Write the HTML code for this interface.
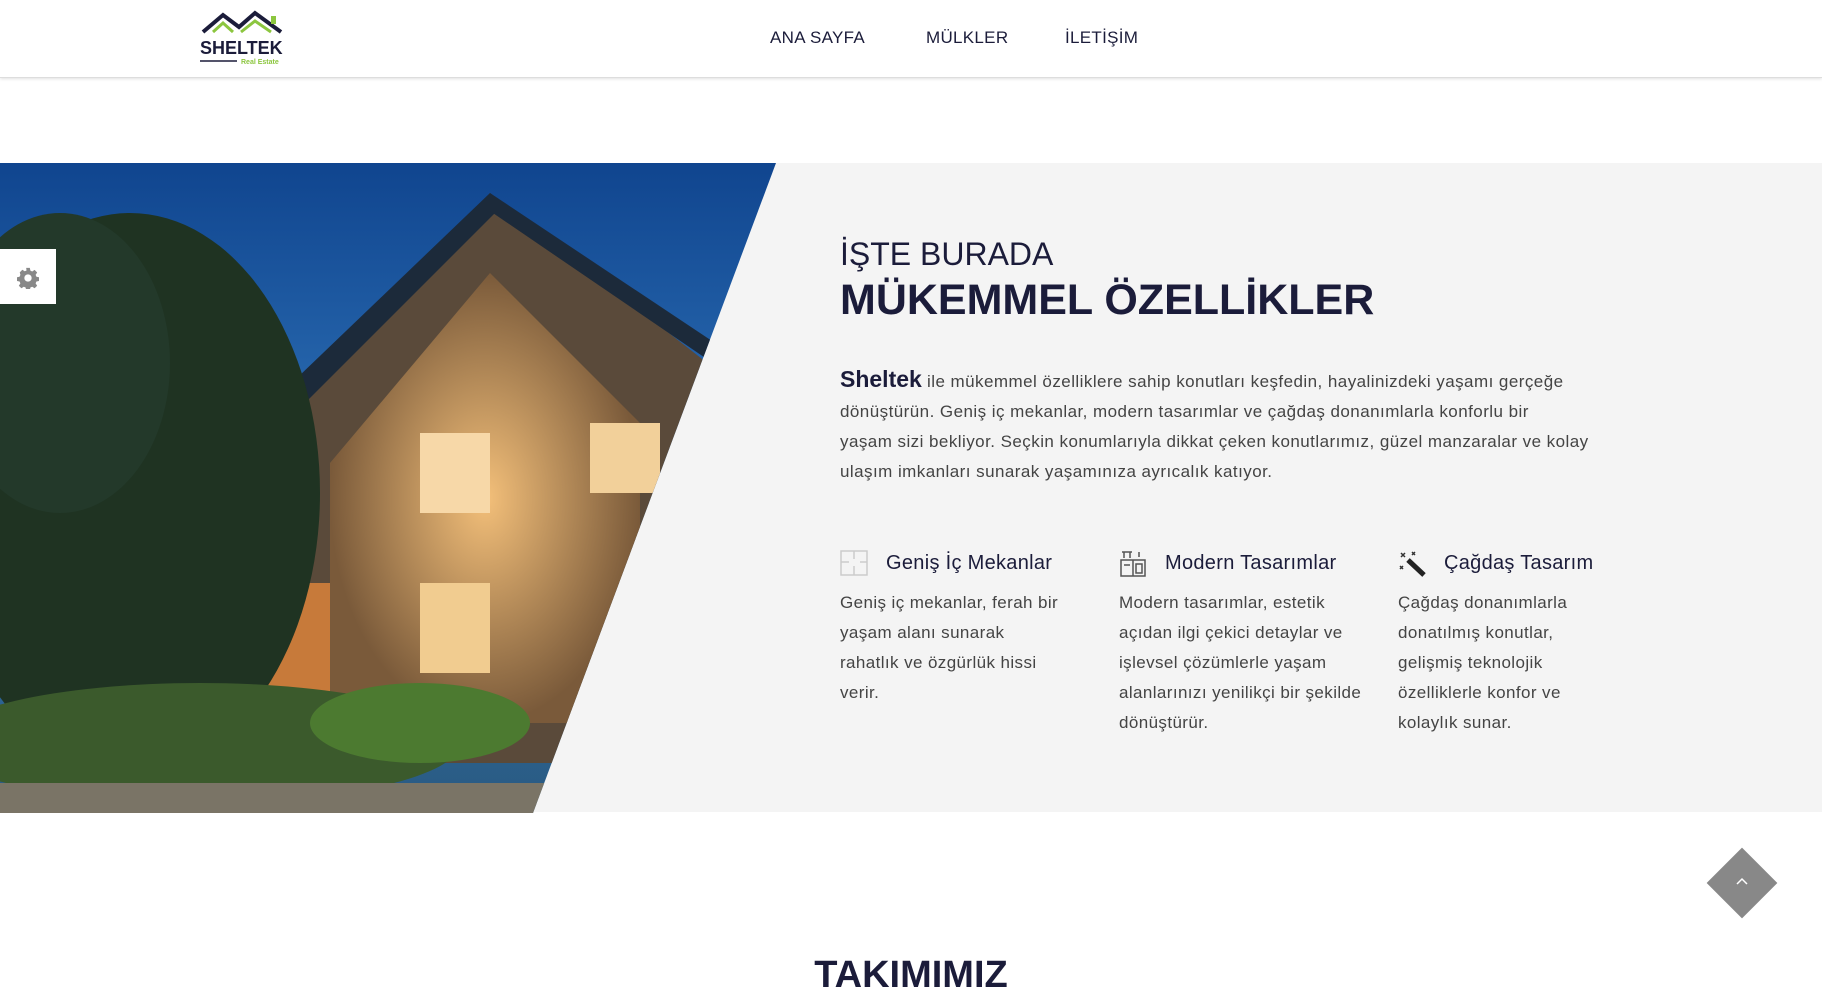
<!DOCTYPE html>
<html><head><meta charset="utf-8"><style>
*{margin:0;padding:0;box-sizing:border-box}
body{width:1822px;height:994px;overflow:hidden;background:#fff;font-family:"Liberation Sans",sans-serif;color:#333;position:relative}
.hdr{position:absolute;left:0;top:0;width:1822px;height:78px;background:#fff;border-bottom:1px solid #ddd;box-shadow:0 1px 3px rgba(0,0,0,.12);z-index:3}
.nav a{position:absolute;top:28px;font-size:17px;color:#1b1c3a;text-decoration:none;letter-spacing:.3px}
.sec{position:absolute;left:0;top:163px;width:1822px;height:649px;background:#f4f4f4}
.gear{position:absolute;left:0;top:249px;width:56px;height:55px;background:#fff;z-index:2}
h3{position:absolute;left:840px;top:236px;font-size:32px;font-weight:normal;color:#1b1c3a}
h2{position:absolute;left:840px;top:276px;font-size:43px;font-weight:bold;color:#1b1c3a}
.p{position:absolute;left:840px;top:364px;width:800px;font-size:17px;line-height:30px;color:#444;letter-spacing:.45px}
.p b{font-size:23px;color:#1b1c3a;letter-spacing:0}
.f{position:absolute;top:552px;width:250px}
.f .t{font-size:20px;color:#1b1c3a;height:32px;padding-left:46px;position:relative;letter-spacing:.3px}
.f svg{position:absolute;left:0;top:-2px}
.f .d{font-size:17px;line-height:30px;color:#444;margin-top:4px;width:245px;letter-spacing:.4px}
.dia{position:absolute;left:1717px;top:858px;width:50px;height:50px;background:#888;transform:rotate(45deg)}
.tk{position:absolute;left:0;width:1822px;text-align:center;top:954px;font-size:38px;font-weight:bold;color:#1b1c3a}
</style></head><body>
<div class="hdr">
<svg style="position:absolute;left:199px;top:10px" width="90" height="56" viewBox="0 0 90 56">
<path d="M4 22 L24 5 L40 17 L56 3 L82 22" fill="none" stroke="#1b1c3a" stroke-width="4"/>
<path d="M14 22 L24 13 L34 22 M42 22 L56 11 L72 22" fill="none" stroke="#8cc63f" stroke-width="3"/>
<rect x="72" y="6" width="5" height="8" fill="#8cc63f"/>
<text x="1" y="44" font-family="Liberation Sans" font-weight="bold" font-size="18" fill="#1b1c3a">SHELTEK</text>
<line x1="1" y1="51" x2="38" y2="51" stroke="#1b1c3a" stroke-width="1.5"/>
<text x="42" y="54" font-family="Liberation Sans" font-weight="bold" font-size="7" fill="#8cc63f">Real Estate</text>
</svg>
<div class="nav"><a style="left:770px">ANA SAYFA</a><a style="left:926px">MÜLKLER</a><a style="left:1065px">İLETİŞİM</a></div>
</div>
<div class="sec"></div>
<svg style="position:absolute;left:0;top:163px" width="780" height="650" viewBox="0 0 780 650">
<defs>
<clipPath id="c"><polygon points="0,0 776,0 533,650 0,650"/></clipPath>
<linearGradient id="sky" x1="0" y1="0" x2="0" y2="1"><stop offset="0" stop-color="#10458f"/><stop offset=".5" stop-color="#2f73b8"/><stop offset="1" stop-color="#2a5a80"/></linearGradient>
<radialGradient id="glow" cx=".5" cy=".5" r=".5"><stop offset="0" stop-color="#f4c07a"/><stop offset="1" stop-color="#7a5a3a"/></radialGradient>
</defs>
<g clip-path="url(#c)">
<rect width="780" height="650" fill="url(#sky)"/>
<polygon points="270,280 490,30 720,210 720,600 270,600" fill="#5a4a3a"/>
<polygon points="330,300 490,110 640,260 640,560 330,560" fill="url(#glow)"/>
<polygon points="250,260 490,30 500,45 270,275" fill="#1c2a3a"/>
<polygon points="490,30 730,190 720,205 490,48" fill="#1c2a3a"/>
<rect x="420" y="270" width="70" height="80" fill="#f7d8a8"/>
<rect x="590" y="260" width="70" height="70" fill="#f2d09a"/>
<rect x="420" y="420" width="70" height="90" fill="#f1cc90"/>
<rect x="250" y="420" width="80" height="130" fill="#c77a3a"/>
<ellipse cx="130" cy="330" rx="190" ry="280" fill="#1f3322"/>
<ellipse cx="60" cy="200" rx="110" ry="150" fill="#23392a"/>
<ellipse cx="200" cy="580" rx="260" ry="60" fill="#3b5a2c"/>
<ellipse cx="420" cy="560" rx="110" ry="40" fill="#4c7a30"/>
<rect x="0" y="620" width="780" height="30" fill="#7a7466"/>
</g>
</svg>
<div class="gear"><svg style="position:absolute;left:17px;top:18px" width="22" height="22" viewBox="0 0 24 24"><path fill="#888" d="M10 1h4l.6 3 2 .9 2.6-1.7 2.8 2.8-1.7 2.6.9 2 3 .6v4l-3 .6-.9 2 1.7 2.6-2.8 2.8-2.6-1.7-2 .9-.6 3h-4l-.6-3-2-.9-2.6 1.7-2.8-2.8 1.7-2.6-.9-2-3-.6v-4l3-.6.9-2L3 5.8 5.8 3l2.6 1.7 2-.9zM12 8a4 4 0 100 8 4 4 0 000-8z"/></svg></div>
<h3>İŞTE BURADA</h3>
<h2>MÜKEMMEL ÖZELLİKLER</h2>
<div class="p"><b>Sheltek</b> ile mükemmel özelliklere sahip konutları keşfedin, hayalinizdeki yaşamı gerçeğe dönüştürün. Geniş iç mekanlar, modern tasarımlar ve çağdaş donanımlarla konforlu bir<br>yaşam sizi bekliyor. Seçkin konumlarıyla dikkat çeken konutlarımız, güzel manzaralar ve kolay<br>ulaşım imkanları sunarak yaşamınıza ayrıcalık katıyor.</div>
<div class="f" style="left:840px"><div class="t"><svg width="28" height="26" viewBox="0 0 28 26" fill="none" stroke="#ccc" stroke-width="1.5"><rect x="1" y="1" width="26" height="24"/><path d="M1 12h8M14 1v8M14 16v9M20 12h7"/></svg>Geniş İç Mekanlar</div><div class="d">Geniş iç mekanlar, ferah bir<br>yaşam alanı sunarak<br>rahatlık ve özgürlük hissi<br>verir.</div></div>
<div class="f" style="left:1119px"><div class="t"><svg width="28" height="28" viewBox="0 0 28 28" fill="none" stroke="#555" stroke-width="1.5"><path d="M3 2h10M5 2v6M11 2v6M20 2v5M2 10h24v16H2zM14 10v16M17 14h6v9h-6zM5 15h6"/></svg>Modern Tasarımlar</div><div class="d">Modern tasarımlar, estetik açıdan ilgi çekici detaylar ve işlevsel çözümlerle yaşam alanlarınızı yenilikçi bir şekilde dönüştürür.</div></div>
<div class="f" style="left:1398px"><div class="t"><svg width="30" height="28" viewBox="0 0 30 28"><path d="M10 10l16 15" stroke="#222" stroke-width="5"/><path d="M3 3l4 4M7 3L3 7M14 2l3 3M17 2l-3 3M2 16l3 3M5 16l-3 3" stroke="#333" stroke-width="1.5"/></svg>Çağdaş Tasarım</div><div class="d" style="width:200px">Çağdaş donanımlarla donatılmış konutlar, gelişmiş teknolojik özelliklerle konfor ve kolaylık sunar.</div></div>
<div class="dia"></div>
<svg style="position:absolute;left:1735px;top:876px" width="14" height="10" viewBox="0 0 14 10"><path d="M2 8l5-5 5 5" fill="none" stroke="#fff" stroke-width="1.5"/></svg>
<div class="tk">TAKIMIMIZ</div>
</body></html>
